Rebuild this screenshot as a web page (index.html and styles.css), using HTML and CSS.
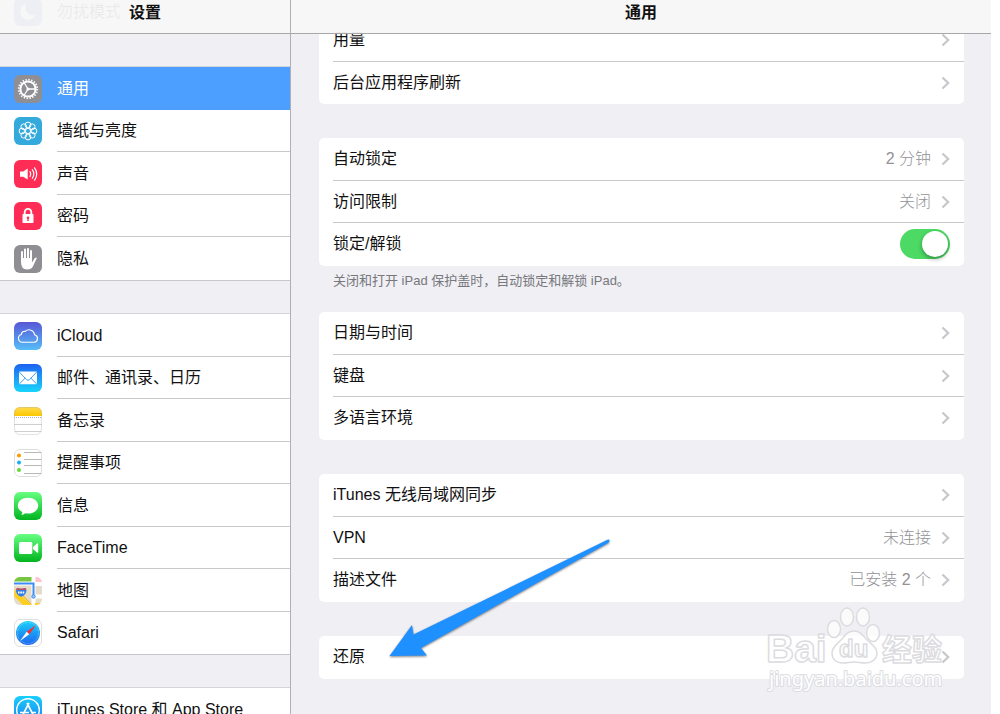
FILE: index.html
```
<!DOCTYPE html>
<html lang="zh-CN">
<head>
    <meta charset="utf-8">
    <title>设置</title>
    <link rel="stylesheet" href="styles.css">
</head>
<body>

<svg class="defs" width="0" height="0" aria-hidden="true">
    <defs>
        <linearGradient id="gCloud" x1="0" y1="0" x2="0" y2="1"><stop offset="0" stop-color="#5856d6"/><stop offset="1" stop-color="#56bdf8"/></linearGradient>
        <linearGradient id="gMail" x1="0" y1="0" x2="0" y2="1"><stop offset="0" stop-color="#1d62f0"/><stop offset="1" stop-color="#19d5fd"/></linearGradient>
        <linearGradient id="gGreen" x1="0" y1="0" x2="0" y2="1"><stop offset="0" stop-color="#67ff81"/><stop offset="1" stop-color="#01b41f"/></linearGradient>
        <linearGradient id="gNote" x1="0" y1="0" x2="0" y2="1"><stop offset="0" stop-color="#ffdb4c"/><stop offset="1" stop-color="#fcc800"/></linearGradient>
        <linearGradient id="gSafari" x1="0" y1="0" x2="0" y2="1"><stop offset="0" stop-color="#19d0fb"/><stop offset="1" stop-color="#1c64ee"/></linearGradient>
        <linearGradient id="gStore" x1="0" y1="0" x2="0" y2="1"><stop offset="0" stop-color="#19d0fb"/><stop offset="1" stop-color="#1d77f2"/></linearGradient>
        <clipPath id="tile"><rect width="28" height="28" rx="6"/></clipPath>
        <symbol id="chevron" viewBox="0 0 9 14"><path d="M1.500 1.500 7.200 7 1.500 12.500" fill="none" stroke="#c7c7cc" stroke-width="2.200"/></symbol>
    </defs>
</svg>

<div class="settings">

    <!-- left column -->
    <nav class="sidebar">
        <h1 class="bar">设置</h1>
        <div class="list">
            <div class="group">
                <a class="item" href="#dnd">
                    <svg class="icon" viewBox="0 0 28 28"><rect width="28" height="28" rx="6" fill="#5856d6"/><path d="M12 6a8 8 0 1 0 9.500 11A8 8 0 0 1 12 6z" fill="#fff"/></svg>
                    <span class="label">勿扰模式</span>
                </a>
            </div>

            <div class="group">
                <a class="item active" href="#general">
                    <svg class="icon" viewBox="0 0 28 28"><rect width="28" height="28" rx="6" fill="#8e8e93"/><g fill="none" stroke="#fff"><circle cx="14" cy="14" r="7.600" stroke-width="2"/><circle cx="14" cy="14" r="9.300" stroke-width="1.800" stroke-dasharray="1.400 1.522"/><path d="M14 14 10 7.500M14 14h7.500M14 14l-4 6.500" stroke-width="1.300"/></g><circle cx="14" cy="14" r="1.600" fill="#fff"/></svg>
                    <span class="label">通用</span>
                </a>
                <a class="item" href="#wallpaper">
                    <svg class="icon" viewBox="0 0 28 28"><rect width="28" height="28" rx="6" fill="#34aadc"/><g fill="none" stroke="#fff" stroke-width="1"><circle cx="14" cy="14" r="2.600"/><circle cx="14" cy="8" r="2.900"/><circle cx="18.200" cy="9.800" r="2.900"/><circle cx="20" cy="14" r="2.900"/><circle cx="18.200" cy="18.200" r="2.900"/><circle cx="14" cy="20" r="2.900"/><circle cx="9.800" cy="18.200" r="2.900"/><circle cx="8" cy="14" r="2.900"/><circle cx="9.800" cy="9.800" r="2.900"/></g></svg>
                    <span class="label">墙纸与亮度</span>
                </a>
                <a class="item" href="#sounds">
                    <svg class="icon" viewBox="0 0 28 28"><rect width="28" height="28" rx="6" fill="#ff2d55"/><path d="M6 11.500h3.200L13.700 8.500v11L9.200 16.700H6z" fill="#fff"/><g fill="none" stroke="#fff" stroke-width="1.200" stroke-linecap="round"><path d="M16 11.600q1.600 2.400 0 4.900"/><path d="M18.300 9.700q3 4.300 0 8.600"/><path d="M20.600 7.800q4.200 6.200 0 12.400"/></g></svg>
                    <span class="label">声音</span>
                </a>
                <a class="item" href="#passcode">
                    <svg class="icon" viewBox="0 0 28 28"><rect width="28" height="28" rx="6" fill="#ff2d55"/><rect x="8.500" y="12" width="11" height="9" rx=".8" fill="#fff"/><path d="M10.700 13V10.500a3.300 3.600 0 0 1 6.600 0V13" fill="none" stroke="#fff" stroke-width="1.900"/><circle cx="14" cy="15.700" r="1.300" fill="#ff2d55"/><path d="M13.500 16h1l.3 3h-1.600z" fill="#ff2d55"/></svg>
                    <span class="label">密码</span>
                </a>
                <a class="item" href="#privacy">
                    <svg class="icon" viewBox="0 0 28 28"><rect width="28" height="28" rx="6" fill="#8e8e93"/><g fill="none" stroke="#fff" stroke-width="2" stroke-linecap="round"><path d="M8 15V7M11 14V4.500M14 14V4M17 14V6"/></g><path d="M7 13h11v4.500l2.700-4.300q1.200-1.200 2.200-.3l-3.900 8.300Q17.500 24.400 13 24.400 7 24.400 7 17z" fill="#fff"/></svg>
                    <span class="label">隐私</span>
                </a>
            </div>

            <div class="group">
                <a class="item" href="#icloud">
                    <svg class="icon" viewBox="0 0 28 28"><rect width="28" height="28" rx="6" fill="url(#gCloud)"/><path d="M8.200 20.300a4 4 0 0 1-.9-7.800 3.200 3.200 0 0 1 4-3.100 5.500 5.500 0 0 1 9.300 3.300 3.900 3.900 0 0 1-.3 7.600z" fill="none" stroke="#fff" stroke-width="1.100"/></svg>
                    <span class="label">iCloud</span>
                </a>
                <a class="item" href="#mail">
                    <svg class="icon" viewBox="0 0 28 28"><rect width="28" height="28" rx="6" fill="url(#gMail)"/><rect x="5" y="7.500" width="18" height="12.700" rx=".7" fill="#fff"/><path d="m5.300 8 7.200 7.600q1.500 1.300 3 0L22.700 8M5.300 19.900l5.900-5.800M22.700 19.900l-5.900-5.800" fill="none" stroke="#2a94f5" stroke-width=".9"/></svg>
                    <span class="label">邮件、通讯录、日历</span>
                </a>
                <a class="item" href="#notes">
                    <svg class="icon" viewBox="0 0 28 28"><g clip-path="url(#tile)"><rect width="28" height="28" fill="#fff"/><rect width="28" height="9" fill="url(#gNote)"/><path d="M0 10.500h28" stroke="#aaa" stroke-dasharray="1 1"/><path d="M0 17.500h28M0 24.500h28" stroke="#d0d0d0"/></g><rect x=".5" y=".5" width="27" height="27" rx="5.500" fill="none" stroke="#aaa" stroke-opacity=".35"/></svg>
                    <span class="label">备忘录</span>
                </a>
                <a class="item" href="#reminders">
                    <svg class="icon" viewBox="0 0 28 28"><rect x=".5" y=".5" width="27" height="27" rx="5.500" fill="#fff" stroke="#dedede"/><path d="M10 3.500h17.500M10 10.500h17.500M10 16.500h17.500M10 24.500h17.500" stroke="#b8b8b8"/><circle cx="5" cy="6.500" r="2" fill="#ff9500"/><circle cx="5" cy="13.500" r="2" fill="#1badf8"/><circle cx="5" cy="21" r="2" fill="#63da38"/></svg>
                    <span class="label">提醒事项</span>
                </a>
                <a class="item" href="#messages">
                    <svg class="icon" viewBox="0 0 28 28"><rect width="28" height="28" rx="6" fill="url(#gGreen)"/><path d="M14 5.800c5.700 0 10.200 3.500 10.200 7.900s-4.500 7.900-10.200 7.900q-1.500 0-2.900-.3-1.500 1.500-3.900 1.500 1.100-1.100 1.200-2.700C5.600 18.700 3.800 16.300 3.800 13.700c0-4.400 4.500-7.900 10.200-7.900z" fill="#fff"/></svg>
                    <span class="label">信息</span>
                </a>
                <a class="item" href="#facetime">
                    <svg class="icon" viewBox="0 0 28 28"><rect width="28" height="28" rx="6" fill="url(#gGreen)"/><rect x="5" y="8" width="13.300" height="12" rx="1.500" fill="#fff"/><path d="m19 13 4-3.500q1.200-.8 1.200.5v8q0 1.300-1.200.5L19 15z" fill="#fff"/></svg>
                    <span class="label">FaceTime</span>
                </a>
                <a class="item" href="#maps">
                    <svg class="icon" viewBox="0 0 28 28"><g clip-path="url(#tile)"><rect width="28" height="28" fill="#e4dcc8"/><path d="M0 0h18v5H0z" fill="#77c63f"/><path d="M21 0h7v5h-7z" fill="#ffc3cf"/><path d="M0 6.500h21" stroke="#fff" stroke-width="4"/><path d="M1 12 17 28H9L0 19z" fill="#ffcf1f"/><path d="M8 17.500 18 28" stroke="#f5a800"/><path d="M19.500 0v28" stroke="#fff" stroke-width="4"/><path d="M21 7h7M21 19.500h7" stroke="#fff" stroke-width="4"/><path d="M21 26h7v2h-7z" fill="#ffcf1f"/><path d="M0 6.500h19.500V18" fill="none" stroke="#3c8df5" stroke-width="2"/><circle cx="19.500" cy="19.500" r="1.700" fill="#9cc6fa" stroke="#3c8df5"/><path d="M3 11q4 1.500 8.500 0 1.500 2 .7 4-1 3.500-5 4.700-4-1.200-5-4.700-.7-2 .8-4z" fill="#317fe5"/><path d="M3 11q4 1.500 8.500 0l1 1.800h-10.500z" fill="#e34245"/><path d="M4 15.500h6.500" stroke="#fff" stroke-width="2" stroke-dasharray="1.600 .7"/></g></svg>
                    <span class="label">地图</span>
                </a>
                <a class="item" href="#safari">
                    <svg class="icon" viewBox="0 0 28 28"><rect x=".5" y=".5" width="27" height="27" rx="5.500" fill="#fff" stroke="#dedede"/><circle cx="14" cy="14" r="12" fill="url(#gSafari)"/><circle cx="14" cy="14" r="10.500" fill="none" stroke="#fff" stroke-opacity=".6" stroke-width="1.200" stroke-dasharray=".4 1"/><path d="m22 6-9.300 6.700 2.600 2.600z" fill="#ff2b2b"/><path d="m6 22 6.700-9.300 2.600 2.600z" fill="#fff"/></svg>
                    <span class="label">Safari</span>
                </a>
            </div>

            <div class="group">
                <a class="item" href="#store">
                    <svg class="icon" viewBox="0 0 28 28"><rect width="28" height="28" rx="6" fill="url(#gStore)"/><g fill="none" stroke="#fff"><circle cx="14" cy="14" r="11.300" stroke-width="1.400"/><path d="m13 7 7 13.500M15 7 8 20.500M6 16.500h9M18.500 16.500h3.500" stroke-width="1.700"/></g></svg>
                    <span class="label">iTunes Store 和 App Store</span>
                </a>
            </div>
        </div>
    </nav>

    <!-- right column -->
    <main class="detail">
        <h1 class="bar">通用</h1>
        <div class="cards">
            <section class="card">
                <a class="row" href="#usage"><span>用量</span><svg class="chevron"><use href="#chevron"/></svg></a>
                <a class="row" href="#refresh"><span>后台应用程序刷新</span><svg class="chevron"><use href="#chevron"/></svg></a>
            </section>

            <section class="card">
                <a class="row" href="#autolock"><span>自动锁定</span><span class="value">2 分钟</span><svg class="chevron"><use href="#chevron"/></svg></a>
                <a class="row" href="#restrictions"><span>访问限制</span><span class="value">关闭</span><svg class="chevron"><use href="#chevron"/></svg></a>
                <div class="row"><label for="coverLock">锁定/解锁</label><input class="switch" type="checkbox" id="coverLock" checked></div>
            </section>
            <p class="note">关闭和打开 iPad 保护盖时，自动锁定和解锁 iPad。</p>

            <section class="card">
                <a class="row" href="#date"><span>日期与时间</span><svg class="chevron"><use href="#chevron"/></svg></a>
                <a class="row" href="#keyboard"><span>键盘</span><svg class="chevron"><use href="#chevron"/></svg></a>
                <a class="row" href="#language"><span>多语言环境</span><svg class="chevron"><use href="#chevron"/></svg></a>
            </section>

            <section class="card">
                <a class="row" href="#wifisync"><span>iTunes 无线局域网同步</span><svg class="chevron"><use href="#chevron"/></svg></a>
                <a class="row" href="#vpn"><span>VPN</span><span class="value">未连接</span><svg class="chevron"><use href="#chevron"/></svg></a>
                <a class="row" href="#profiles"><span>描述文件</span><span class="value">已安装 2 个</span><svg class="chevron"><use href="#chevron"/></svg></a>
            </section>

            <section class="card">
                <a class="row" href="#reset"><span>还原</span><svg class="chevron"><use href="#chevron"/></svg></a>
            </section>
        </div>

        <svg class="pointer" viewBox="0 0 224 122" aria-hidden="true"><path d="M1.500 118 24 87l1.500 9.500L219 2q2.500-1 2.500.5 0 1.500-1.500 2.500L33 110l6 7.500z" fill="#1e90ff"/></svg>

        <svg class="watermark" viewBox="0 0 184 90" aria-hidden="true">
            <g class="ink">
                <ellipse cx="69" cy="25" rx="6.500" ry="8.500"/>
                <ellipse cx="82" cy="13" rx="6.500" ry="9"/>
                <ellipse cx="98" cy="13" rx="6.500" ry="9"/>
                <ellipse cx="108" cy="29" rx="6.500" ry="8.500"/>
                <path d="M89 27c7 0 9 5 13 9s10 7 10 13-5 10-12 10c-4 0-7-1-11-1s-7 1-11 1c-7 0-11-4-11-10 0-6 5-9 9-13s6-9 13-9z"/>
                <text class="mark" x="1" y="58" font-size="39">Bai</text>
                <text class="mark" x="74" y="53" font-size="24">du</text>
                <text class="mark" x="117" y="56" font-size="30">经验</text>
                <text class="site" x="4" y="82" font-size="20">jingyan.baidu.com</text>
            </g>
        </svg>
    </main>
</div>

</body>
</html>
```
FILE: styles.css
```
*{
    box-sizing: border-box;
}
body{
    margin: 0;
    background-color: #fff;
    color: #111;
    font-family: "Liberation Sans", "Noto Sans CJK SC", sans-serif;
    font-size: 16px;
    line-height: 24px;
}
a{
    color: inherit;
    text-decoration: none;
}
.defs{
    position: absolute;
}
.settings{
    display: grid;
    grid-template-columns: 291px 1fr;
    height: 100vh;
    margin-right: 9px;
    overflow: hidden;
    background-color: #efeff4;
}

/* title bars lie over the scrolled lists */
.bar{
    position: absolute;
    z-index: 2;
    top: 0;
    left: 0;
    right: 0;
    height: 34px;
    margin: 0;
    border-bottom: 1px solid #a7a7aa;
    background-color: rgba(247, 247, 247, 0.95);
    font-size: 16px;
    font-weight: 600;
    line-height: 26px;
    text-align: center;
}

.sidebar{
    position: relative;
    overflow: hidden;
    border-right: 1px solid #b0b0b4;
}
.list{
    display: flex;
    flex-direction: column;
    gap: 34px;
    margin-top: -10px;
}
.group{
    background-color: #fff;
    box-shadow: 0 -1px #d4d4d9, 0 1px #c8c7cc;
}
.item{
    display: flex;
    align-items: center;
    gap: 15px;
    height: 43px;
    padding-left: 14px;
}
.item:nth-child(even){
    height: 42px;
}
.icon{
    flex: none;
    width: 28px;
    height: 28px;
}
.label{
    flex: 1;
    align-self: stretch;
    display: flex;
    align-items: center;
    padding-top: 1px;
    border-bottom: 1px solid #c8c7cc;
    white-space: pre;
}
.item:last-child .label,
.active .label{
    border-bottom-color: transparent;
}
.active{
    background-color: #4c9eff;
    color: #fff;
}

.detail{
    position: relative;
    overflow: hidden;
}
.cards{
    padding: 19px 27px 0 28px;
}
.card{
    margin-bottom: 34px;
    padding-left: 14px;
    border-radius: 5px;
    background-color: #fff;
}
.row{
    display: flex;
    align-items: center;
    gap: 10px;
    height: 43px;
    padding-right: 14px;
    border-bottom: 1px solid #c8c7cc;
}
.row:nth-child(even){
    height: 42px;
}
.row:last-child{
    border-bottom-color: transparent;
}
.row > :first-child{
    flex: 1;
}
.value{
    color: #929297;
    font-weight: 300;
}
.chevron{
    width: 9px;
    height: 14px;
}
.note{
    margin: -34px 0 0;
    padding: 5px 14px 21px;
    color: #77777c;
    font-size: 13px;
    line-height: 20px;
}

.switch{
    appearance: none;
    width: 50px;
    height: 30px;
    margin: 0;
    padding: 2px;
    border-radius: 15px;
    background-color: #d8d8dc;
}
.switch::before{
    content: "";
    display: block;
    width: 26px;
    height: 26px;
    border-radius: 50%;
    background-color: #fff;
    box-shadow: 0 2px 4px rgba(0, 0, 0, 0.35);
}
.switch:checked{
    background-color: #4cd964;
}
.switch:checked::before{
    margin-left: auto;
}

/* arrow and stamp drawn over the cards */
.pointer{
    position: absolute;
    top: 538px;
    left: 97px;
    width: 224px;
    height: 122px;
    filter: drop-shadow(0 1px 1px rgba(0, 0, 0, 0.5));
}
.watermark{
    position: absolute;
    top: 604px;
    right: 42px;
    width: 184px;
    height: 90px;
    overflow: visible;
}
.ink{
    fill: #fff;
    fill-opacity: 0.75;
    stroke: #dcdce0;
    stroke-width: 1.5px;
    stroke-linejoin: round;
}
.mark{
    font-family: "Liberation Sans", "Noto Sans CJK SC", sans-serif;
    font-weight: 700;
}
.site{
    font-family: "Noto Sans", sans-serif;
    stroke-width: 2px;
    paint-order: stroke;
    fill-opacity: 1;
}
```
